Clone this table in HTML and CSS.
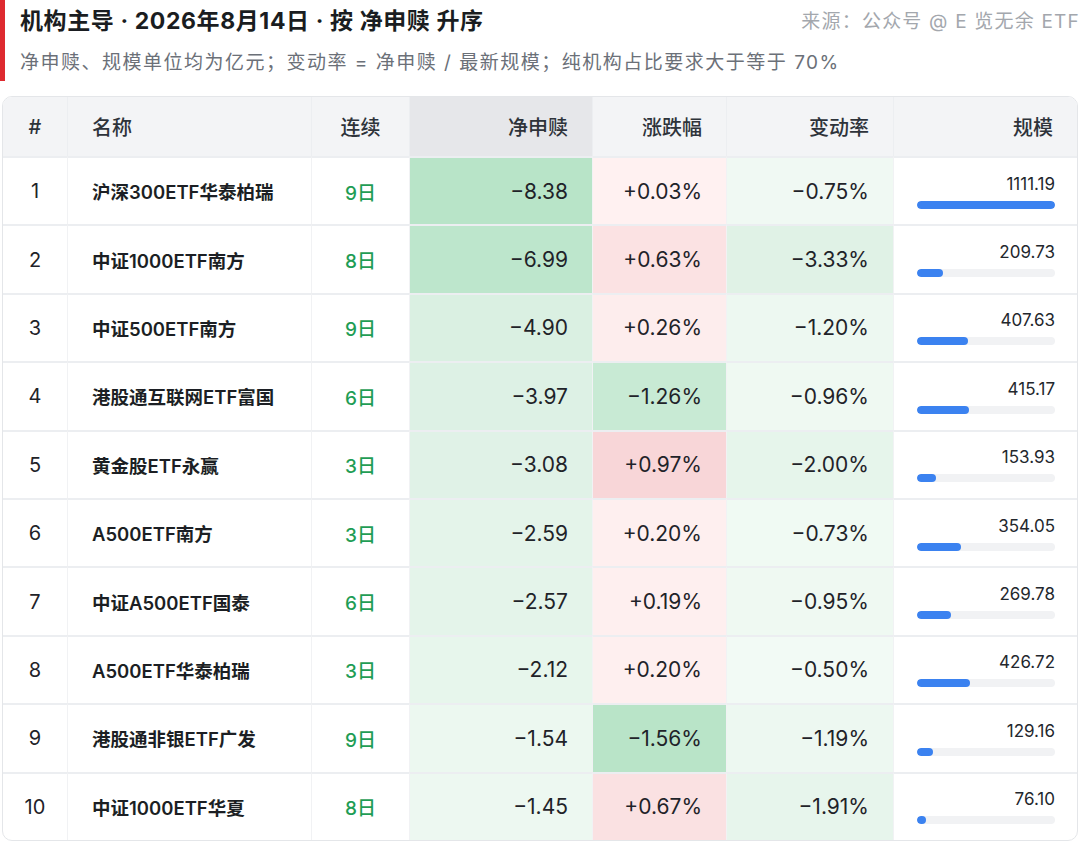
FILE: index.html
```html
<!DOCTYPE html>
<html lang="zh-CN">
<head>
<meta charset="utf-8">
<title>机构主导</title>
<link rel="stylesheet" href="styles.css">
</head>
<body>
<div class="top">
  <div class="title-row">
    <div class="title">机构主导 · 2026年8月14日 · 按 净申赎 升序</div>
    <div class="source">来源：公众号 @ E 览无余 ETF</div>
  </div>
  <div class="subtitle">净申赎、规模单位均为亿元；变动率 = 净申赎 / 最新规模；纯机构占比要求大于等于 70%</div>
</div>

<table class="grid">
  <colgroup>
    <col class="c-rank"><col class="c-name"><col class="c-days"><col class="c-flow"><col class="c-chg"><col class="c-rate"><col class="c-size">
  </colgroup>
  <thead>
    <tr>
      <th class="center">#</th>
      <th class="left">名称</th>
      <th class="center">连续</th>
      <th class="right sorted">净申赎</th>
      <th class="right">涨跌幅</th>
      <th class="right">变动率</th>
      <th class="right">规模</th>
    </tr>
  </thead>
  <tbody>
    <tr>
      <td class="center rank">1</td><td class="name">沪深300ETF华泰柏瑞</td><td class="center days">9日</td>
      <td class="num" style="background:#b8e4c8">−8.38</td>
      <td class="num" style="background:#fff1f1">+0.03%</td>
      <td class="num" style="background:#f0f9f3">−0.75%</td>
      <td class="size"><div class="size-val">1111.19</div><div class="track"><div class="fill" style="width:100%"></div></div></td>
    </tr>
    <tr>
      <td class="center rank">2</td><td class="name">中证1000ETF南方</td><td class="center days">8日</td>
      <td class="num" style="background:#bde6cc">−6.99</td>
      <td class="num" style="background:#fbe2e3">+0.63%</td>
      <td class="num" style="background:#e0f2e6">−3.33%</td>
      <td class="size"><div class="size-val">209.73</div><div class="track"><div class="fill" style="width:18.9%"></div></div></td>
    </tr>
    <tr>
      <td class="center rank">3</td><td class="name">中证500ETF南方</td><td class="center days">9日</td>
      <td class="num" style="background:#daf0e2">−4.90</td>
      <td class="num" style="background:#fdeded">+0.26%</td>
      <td class="num" style="background:#edf8f1">−1.20%</td>
      <td class="size"><div class="size-val">407.63</div><div class="track"><div class="fill" style="width:36.7%"></div></div></td>
    </tr>
    <tr>
      <td class="center rank">4</td><td class="name">港股通互联网ETF富国</td><td class="center days">6日</td>
      <td class="num" style="background:#ddf1e5">−3.97</td>
      <td class="num" style="background:#c8ead4">−1.26%</td>
      <td class="num" style="background:#eff9f2">−0.96%</td>
      <td class="size"><div class="size-val">415.17</div><div class="track"><div class="fill" style="width:37.4%"></div></div></td>
    </tr>
    <tr>
      <td class="center rank">5</td><td class="name">黄金股ETF永赢</td><td class="center days">3日</td>
      <td class="num" style="background:#e0f2e7">−3.08</td>
      <td class="num" style="background:#f8d6d8">+0.97%</td>
      <td class="num" style="background:#e6f5eb">−2.00%</td>
      <td class="size"><div class="size-val">153.93</div><div class="track"><div class="fill" style="width:13.9%"></div></div></td>
    </tr>
    <tr>
      <td class="center rank">6</td><td class="name">A500ETF南方</td><td class="center days">3日</td>
      <td class="num" style="background:#e4f4ea">−2.59</td>
      <td class="num" style="background:#feefef">+0.20%</td>
      <td class="num" style="background:#f0faf3">−0.73%</td>
      <td class="size"><div class="size-val">354.05</div><div class="track"><div class="fill" style="width:31.9%"></div></div></td>
    </tr>
    <tr>
      <td class="center rank">7</td><td class="name">中证A500ETF国泰</td><td class="center days">6日</td>
      <td class="num" style="background:#e4f4ea">−2.57</td>
      <td class="num" style="background:#feefef">+0.19%</td>
      <td class="num" style="background:#eff9f2">−0.95%</td>
      <td class="size"><div class="size-val">269.78</div><div class="track"><div class="fill" style="width:24.3%"></div></div></td>
    </tr>
    <tr>
      <td class="center rank">8</td><td class="name">A500ETF华泰柏瑞</td><td class="center days">3日</td>
      <td class="num" style="background:#e7f6ec">−2.12</td>
      <td class="num" style="background:#feefef">+0.20%</td>
      <td class="num" style="background:#f2faf5">−0.50%</td>
      <td class="size"><div class="size-val">426.72</div><div class="track"><div class="fill" style="width:38.4%"></div></div></td>
    </tr>
    <tr>
      <td class="center rank">9</td><td class="name">港股通非银ETF广发</td><td class="center days">9日</td>
      <td class="num" style="background:#ecf8f0">−1.54</td>
      <td class="num" style="background:#b9e4c8">−1.56%</td>
      <td class="num" style="background:#edf8f1">−1.19%</td>
      <td class="size"><div class="size-val">129.16</div><div class="track"><div class="fill" style="width:11.6%"></div></div></td>
    </tr>
    <tr>
      <td class="center rank">10</td><td class="name">中证1000ETF华夏</td><td class="center days">8日</td>
      <td class="num" style="background:#edf8f1">−1.45</td>
      <td class="num" style="background:#fae1e2">+0.67%</td>
      <td class="num" style="background:#e7f5ec">−1.91%</td>
      <td class="size"><div class="size-val">76.10</div><div class="track"><div class="fill" style="width:6.8%"></div></div></td>
    </tr>
  </tbody>
</table>
</body>
</html>
```

FILE: styles.css
```css
* { box-sizing: border-box; }
html, body { margin: 0; padding: 0; background: #ffffff; }
body {
  font-family: "Inter", "Noto Sans CJK SC", sans-serif;
  color: #1f2329;
  width: 1080px;
}

.top {
  border-left: 5px solid #de2a2f;
  height: 81px;
  padding-left: 15px;
  padding-right: 2px;
}
.title-row {
  display: flex;
  justify-content: space-between;
  align-items: center;
  height: 38px;
}
.title {
  font-size: 23px;
  font-weight: 700;
  color: #1a1d21;
  letter-spacing: 0.6px;
}
.source {
  font-size: 19px;
  color: #a3a7ad;
  letter-spacing: 1.2px;
  margin-right: -2px;
}
.subtitle {
  margin-top: 10px;
  line-height: 30px;
  font-size: 19px;
  color: #6b7078;
  letter-spacing: 1.5px;
}

.grid {
  margin: 15px 2px 0 2px;
  width: 1076px;
  table-layout: fixed;
  border-collapse: separate;
  border-spacing: 0;
  border: 1px solid #e4e6e9;
  border-radius: 10px;
  overflow: hidden;
}
.c-rank { width: 64px; }
.c-name { width: 244px; }
.c-days { width: 98px; }
.c-flow { width: 183px; }
.c-chg { width: 134px; }
.c-rate { width: 167px; }
.c-size { width: 184px; }

th {
  height: 59px;
  background: #f3f4f6;
  font-size: 20px;
  font-weight: 500;
  color: #2e333a;
  padding: 0 24px;
  border-left: 1px solid #eceef1;
}
th:first-child, td:first-child { border-left: none; }
th.sorted { background: #e6e7ea; }
.left { text-align: left; }
.center { text-align: center; }
.right { text-align: right; }

td {
  height: 68.4px;
  border-top: 2px solid #eceef1;
  border-left: 1px solid #f1f2f4;
  padding: 0 24px;
  font-size: 20px;
  color: #1f2329;
}
td.rank { padding: 0; font-size: 20px; }
td.name {
  font-size: 18.5px;
  font-weight: 600;
  color: #1c1f24;
  white-space: nowrap;
}
td.days { padding: 0; color: #1f9d55; font-size: 19px; font-weight: 500; }
td.num { text-align: right; font-size: 21px; }

td.size { padding: 0 22px 0 23px; }
.size-val {
  text-align: right;
  font-size: 17px;
  line-height: 20px;
  color: #23272d;
}
.track {
  margin-top: 7px;
  height: 8px;
  border-radius: 4px;
  background: #f1f2f4;
  overflow: hidden;
}
.fill {
  height: 8px;
  min-width: 8px;
  border-radius: 4px;
  background: #3b82f0;
}
```
